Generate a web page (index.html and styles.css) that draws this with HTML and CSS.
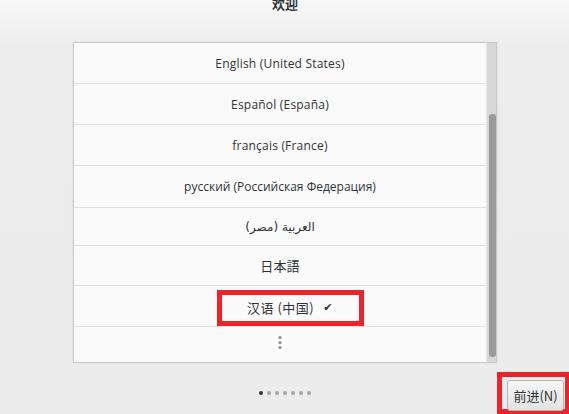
FILE: index.html
```html
<!DOCTYPE html>
<html>
<head>
  <meta charset="utf-8">
  <title>欢迎</title>
  <link rel="stylesheet" href="styles.css">
</head>
<body>
  <header class="topbar">
    <h1 class="title">欢迎</h1>
  </header>

  <main class="content">
    <div class="panel">
      <ul class="lang-list">
        <li class="lang-row">English (United States)</li>
        <li class="lang-row">Español (España)</li>
        <li class="lang-row">français (France)</li>
        <li class="lang-row row-tall">русский (Российская Федерация)</li>
        <li class="lang-row row-arabic" dir="rtl">العربية (مصر)</li>
        <li class="lang-row row-ja">日本語</li>
        <li class="lang-row">
          <span class="mark-box selected">汉语 (中国)<span class="check">✔</span></span>
        </li>
        <li class="lang-row more">
          <svg width="4" height="13" viewBox="0 0 4 13">
            <circle cx="2" cy="1.5" r="1.5" fill="#8a8a8a"/>
            <circle cx="2" cy="6.5" r="1.5" fill="#8a8a8a"/>
            <circle cx="2" cy="11.5" r="1.5" fill="#8a8a8a"/>
          </svg>
        </li>
      </ul>
      <div class="scrollbar">
        <div class="thumb"></div>
      </div>
    </div>
  </main>

  <footer class="footer">
    <div class="pages">
      <span class="dot active"></span>
      <span class="dot"></span>
      <span class="dot"></span>
      <span class="dot"></span>
      <span class="dot"></span>
      <span class="dot"></span>
      <span class="dot"></span>
    </div>
    <div class="next-box">
      <button class="next-btn">前进(N)</button>
    </div>
  </footer>
</body>
</html>
```

FILE: styles.css
```css
body {
  margin: 0;
  width: 569px;
  height: 414px;
  overflow: hidden;
  background: linear-gradient(#f8f8f8 0, #ededed 45px, #ececec 100%);
  font-family: "Open Sans", "Noto Sans CJK SC", sans-serif;
  color: #2e3436;
}

.topbar {
  height: 14px;
  overflow: hidden;
  text-align: center;
}

/* the heading is scrolled half out of view in the original */
.title {
  margin: -3px 0 0;
  font-size: 13px;
  line-height: 13px;
  font-weight: bold;
  font-family: "Noto Sans CJK SC", sans-serif;
  color: #2e3436;
  padding-left: 1px;
}

.content {
  padding: 28px 0 0 73px;
}

.panel {
  width: 424px;
  height: 321px;
  box-sizing: border-box;
  display: flex;
  background: #fafafa;
  border: 1px solid #c9c9c9;
  box-shadow: 0 0 2px rgba(0, 0, 0, 0.08);
}

.lang-list {
  list-style: none;
  margin: 0;
  padding: 0;
  flex: 1;
  display: flex;
  flex-direction: column;
}

.lang-row {
  height: 40px;
  flex: none;
  display: flex;
  justify-content: center;
  align-items: center;
  font-size: 12px;
  letter-spacing: 0.2px;
  border-bottom: 1px solid #e1e1e1;
}

.row-tall {
  height: 41px;
  letter-spacing: 0;
}

.row-arabic {
  height: 37px;
  font-family: "DejaVu Sans", sans-serif;
  letter-spacing: 0;
}

.row-ja {
  height: 39px;
  font-family: "Noto Sans CJK JP", sans-serif;
  font-size: 13px;
}

.lang-row.more {
  flex: 1;
  border-bottom: none;
  padding-bottom: 4px;
}

.mark-box {
  display: inline-flex;
  align-items: center;
  box-sizing: border-box;
  width: 147px;
  height: 36px;
  margin: 3px 0 0 21px;
  padding: 0 0 0 25px;
  border: 5px solid #ec2329;
  font-family: "Noto Sans CJK SC", sans-serif;
  font-size: 13px;
  letter-spacing: 0.5px;
}

.check {
  margin-left: 9px;
  font-family: "DejaVu Sans", sans-serif;
  font-size: 11px;
}

.scrollbar {
  width: 10px;
  background: #d7d7d7;
  border-left: 1px solid #e4e4e4;
  box-sizing: border-box;
  padding: 71px 0 5px 2px;
  display: flex;
}

.thumb {
  width: 6px;
  flex: 1;
  background: #9a9a9a;
  border-radius: 3px;
}

.footer {
  display: grid;
  grid-template-columns: 1fr auto 1fr;
  height: 51px;
}

.pages {
  grid-column: 2;
  display: flex;
  gap: 4px;
  margin-top: 28px;
  align-self: start;
  padding-left: 1px;
}

.dot {
  width: 4px;
  height: 4px;
  border-radius: 50%;
  background: #a6a6a6;
}

.dot.active {
  background: #2e3436;
}

.next-box {
  grid-column: 3;
  justify-self: end;
  align-self: start;
  margin-top: 9px;
  width: 72px;
  height: 42px;
  box-sizing: border-box;
  border: 5px solid #ec2329;
  border-right-width: 4px;
  padding: 3px 0 0 5px;
}

.next-btn {
  width: 57px;
  height: 31px;
  font-family: "Noto Sans CJK SC", sans-serif;
  font-size: 13px;
  color: #2e3436;
  background: linear-gradient(#f6f6f6, #e3e3e3);
  border: 1px solid #b5b5b5;
  border-radius: 3px;
  padding: 0;
}
```
